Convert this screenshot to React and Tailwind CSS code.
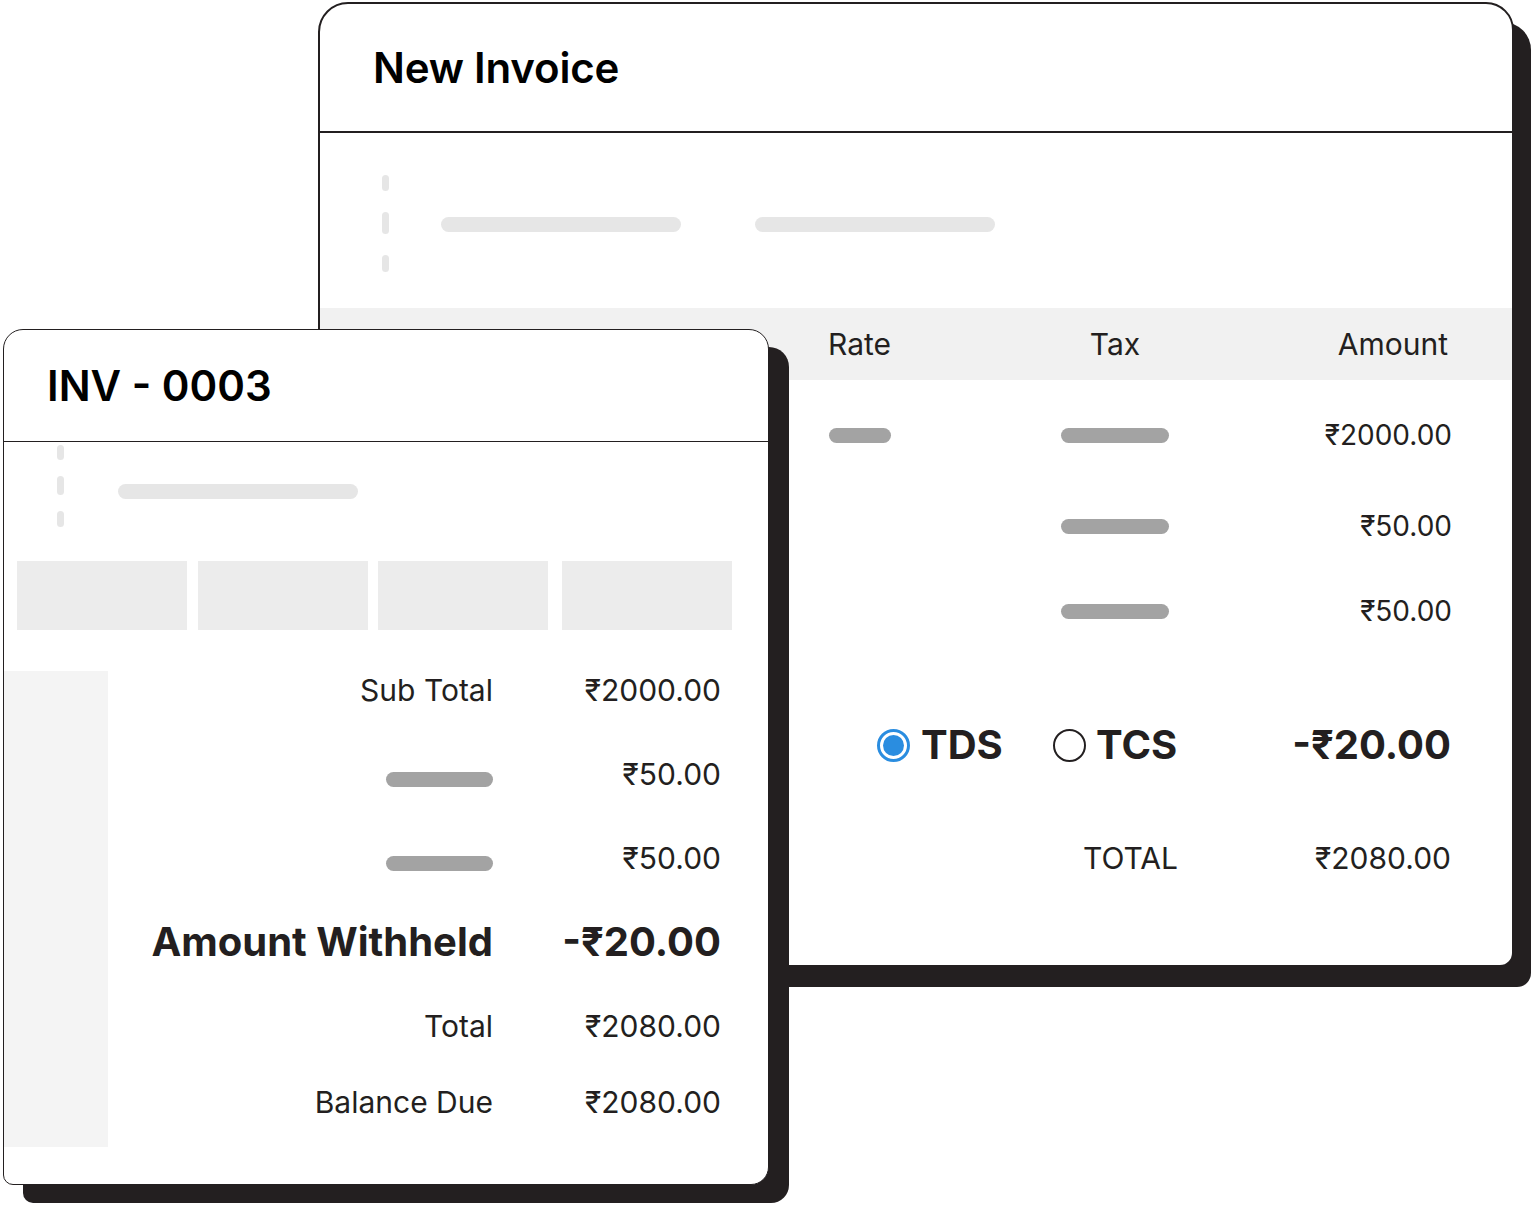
import React from "react";

const font = { fontFamily: "Inter, 'Noto Sans', 'Liberation Sans', sans-serif" };

function Pill({ className }) {
  return <div className={"rounded-full " + className} />;
}

function Radio({ checked }) {
  if (checked) {
    return (
      <div className="w-[33px] h-[33px] rounded-full border-[3px] border-[#2a8de0] flex items-center justify-center shrink-0">
        <div className="w-[21px] h-[21px] rounded-full bg-[#2a8de0]" />
      </div>
    );
  }
  return <div className="w-[33px] h-[33px] rounded-full border-2 border-[#231f20] shrink-0" />;
}

function BackCard() {
  return (
    <div className="absolute left-[318px] top-[2px] w-[1196px] h-[965px] bg-white border-2 border-[#231f20] rounded-tl-[30px] rounded-tr-[28px] rounded-b-[14px] shadow-[17px_20px_0_0_#231f20] flex flex-col overflow-hidden text-[#231f20]">
      <div className="h-[129px] shrink-0 flex items-center pl-[53px] border-b-2 border-[#231f20]">
        <span className="text-[42px] font-semibold text-black leading-none tracking-[-0.2px]">New Invoice</span>
      </div>
      <div className="h-[175px] shrink-0 flex items-start pl-[62px] pt-[42px]">
        <div className="flex flex-col w-[7px]">
          <Pill className="h-[16px] bg-[#e6e6e6]" />
          <Pill className="h-[22px] mt-[21px] bg-[#e6e6e6]" />
          <Pill className="h-[17px] mt-[21px] bg-[#e6e6e6]" />
        </div>
        <Pill className="ml-[52px] mt-[42px] w-[240px] h-[15px] bg-[#e6e6e6]" />
        <Pill className="ml-[74px] mt-[42px] w-[240px] h-[15px] bg-[#e6e6e6]" />
      </div>
      <div className="h-[72px] shrink-0 flex items-center bg-[#f1f1f1] text-[30px] leading-none">
        <div className="w-[508px] shrink-0" />
        <div className="w-[212px] shrink-0">Rate</div>
        <div className="w-[150px] shrink-0 text-center">Tax</div>
        <div className="flex-1 text-right pr-[64px]">Amount</div>
      </div>
      {[
        { h: "h-[110px]", rate: true, amt: "₹2000.00" },
        { h: "h-[72px]", rate: false, amt: "₹50.00" },
        { h: "h-[98px]", rate: false, amt: "₹50.00" },
      ].map((r, i) => (
        <div key={i} className={"shrink-0 flex items-center text-[28px] leading-none " + r.h}>
          <div className="w-[508px] shrink-0" />
          <div className="w-[212px] shrink-0 flex">
            {r.rate && <Pill className="ml-[1px] w-[62px] h-[15px] bg-[#a3a3a3]" />}
          </div>
          <div className="w-[150px] shrink-0 flex justify-center">
            <Pill className="w-[108px] h-[15px] bg-[#a3a3a3]" />
          </div>
          <div className="flex-1 text-right pr-[60px]">{r.amt}</div>
        </div>
      ))}
      <div className="h-[70px] mt-[50px] shrink-0 flex items-center text-[40px] font-bold leading-none">
        <div className="w-[557px] shrink-0" />
        <div className="w-[176px] shrink-0 flex items-center">
          <Radio checked />
          <span className="ml-[11px]">TDS</span>
        </div>
        <div className="w-[140px] shrink-0 flex items-center">
          <Radio />
          <span className="ml-[10px]">TCS</span>
        </div>
        <div className="flex-1 text-right pr-[61px]">-₹20.00</div>
      </div>
      <div className="h-[70px] mt-[43px] shrink-0 flex items-center leading-none text-[30px]">
        <div className="w-[858px] shrink-0 text-right">TOTAL</div>
        <div className="flex-1 text-right pr-[61px]">₹2080.00</div>
      </div>
    </div>
  );
}

function FrontCard() {
  const rows = [
    { h: "h-[84px]", label: "Sub Total", value: "₹2000.00" },
    { h: "h-[84px]", bar: true, value: "₹50.00" },
    { h: "h-[84px]", bar: true, value: "₹50.00" },
    { h: "h-[84px]", label: "Amount Withheld", value: "-₹20.00", bold: true },
    { h: "h-[84px]", label: "Total", value: "₹2080.00" },
    { h: "h-[67px]", label: "Balance Due", value: "₹2080.00" },
  ];
  return (
    <div className="absolute left-[3px] top-[329px] w-[766px] h-[856px] bg-white border-[1.5px] border-[#231f20] rounded-tl-[20px] rounded-tr-[20px] rounded-br-[18px] rounded-bl-[10px] shadow-[20px_18px_0_0_#231f20] flex flex-col overflow-hidden text-[#231f20]">
      <div className="h-[112px] shrink-0 flex items-center pl-[43px] border-b-[1.5px] border-[#231f20]">
        <span className="text-[42px] font-semibold text-black leading-none">INV - 0003</span>
      </div>
      <div className="h-[119px] shrink-0 flex items-start pl-[53px] pt-[3px]">
        <div className="flex flex-col w-[7px]">
          <Pill className="h-[15px] bg-[#e6e6e6]" />
          <Pill className="h-[19px] mt-[16px] bg-[#e6e6e6]" />
          <Pill className="h-[16px] mt-[16px] bg-[#e6e6e6]" />
        </div>
        <Pill className="ml-[54px] mt-[39px] w-[240px] h-[15px] bg-[#e6e6e6]" />
      </div>
      <div className="h-[69px] shrink-0 flex pl-[13px]">
        <div className="w-[170px] bg-[#ececec]" />
        <div className="w-[170px] ml-[11px] bg-[#ececec]" />
        <div className="w-[170px] ml-[10px] bg-[#ececec]" />
        <div className="w-[170px] ml-[14px] bg-[#ececec]" />
      </div>
      <div className="flex items-start">
        <div className="w-[104px] h-[476px] mt-[41px] bg-[#f4f4f4] shrink-0" />
        <div className="flex-1 flex flex-col pt-[18px] pr-[47px]">
          {rows.map((r, i) => (
            <div key={i} className={"flex items-center leading-none " + r.h + (r.bold ? " text-[40px] font-bold" : " text-[30px]")}>
              <div className="flex-1 flex justify-end">
                {r.bar ? <Pill className="mt-[10px] w-[107px] h-[15px] bg-[#a3a3a3]" /> : <span>{r.label}</span>}
              </div>
              <div className="w-[228px] shrink-0 text-right">{r.value}</div>
            </div>
          ))}
        </div>
      </div>
    </div>
  );
}

export default function App() {
  return (
    <div className="relative w-[1531px] h-[1205px] bg-white overflow-hidden" style={font}>
      <BackCard />
      <FrontCard />
    </div>
  );
}
